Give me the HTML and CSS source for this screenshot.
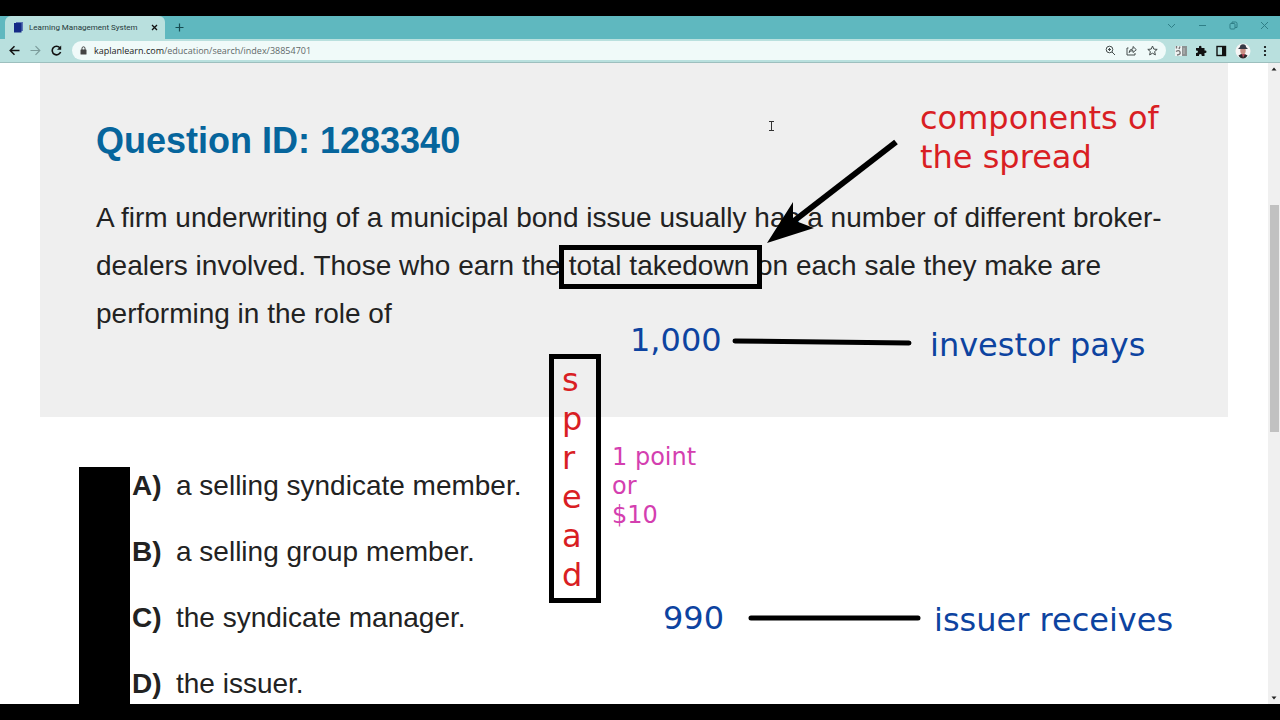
FILE: index.html
```html
<!DOCTYPE html>
<html lang="en">
<head>
  <meta charset="UTF-8" />
  <title>Learning Management System</title>
  <link rel="stylesheet" href="styles.css">
</head>
<body>

  <header class="browser">
    <div class="tabs">
      <div class="tab">
        <svg class="favicon" width="10" height="11" viewBox="0 0 10 11"><path d="M2 0H9V9H2Z" fill="#5b75b5"/><path d="M0 1H7.500V10.500H0Z" fill="#142a86"/></svg>
        <span class="tab-title">Learning Management System</span>
        <button class="tab-close" aria-label="Close tab">
          <svg width="7" height="7" viewBox="0 0 7 7"><path d="M1 1L6 6M6 1L1 6" stroke="#111" stroke-width="1.300"/></svg>
        </button>
      </div>
      <button class="new-tab" aria-label="New tab">
        <svg width="9" height="9" viewBox="0 0 9 9"><path d="M4.500 .500V8.500M.500 4.500H8.500" stroke="#174c52" stroke-width="1.200"/></svg>
      </button>
      <div class="window-buttons">
        <button aria-label="Search tabs"><svg width="9" height="9" viewBox="0 0 9 9"><path d="M1 3L4.500 6.500L8 3"/></svg></button>
        <button aria-label="Minimize"><svg width="9" height="9" viewBox="0 0 9 9"><path d="M1 4.500H8"/></svg></button>
        <button aria-label="Restore"><svg width="9" height="9" viewBox="0 0 9 9"><rect x="1" y="2.500" width="5" height="5.500" rx="1"/><path d="M3 2.500V1H6.500Q8 1 8 2.500V6.500H6"/></svg></button>
        <button aria-label="Close"><svg width="9" height="9" viewBox="0 0 9 9"><path d="M1 1L8 8M8 1L1 8"/></svg></button>
      </div>
    </div>

    <div class="toolbar">
      <div class="nav">
        <button aria-label="Back"><svg width="11" height="11" viewBox="0 0 11 11"><path d="M10.500 5.500H1.500M5.500 1.200L1.200 5.500L5.500 9.800" fill="none" stroke="#111" stroke-width="1.500"/></svg></button>
        <button aria-label="Forward"><svg width="11" height="11" viewBox="0 0 11 11"><path d="M.500 5.500H9.500M5.500 1.200L9.800 5.500L5.500 9.800" fill="none" stroke="#7c9c9b" stroke-width="1.200"/></svg></button>
        <button aria-label="Reload"><svg width="11" height="11" viewBox="0 0 11 11"><path d="M9.600 7A4.300 4.300 0 1 1 8.800 2.700" fill="none" stroke="#111" stroke-width="1.600"/><path d="M10.200 .500V4.700H6Z" fill="#111"/></svg></button>
      </div>
      <div class="address">
        <svg width="7" height="9" viewBox="0 0 7 9"><rect x=".500" y="3.500" width="6" height="5" rx=".600" fill="#444"/><path d="M2 4V2.300A1.500 1.500 0 0 1 5 2.300V4" fill="none" stroke="#444"/></svg>
        <a class="url" href="#">kaplanlearn.com<span>/education/search/index/38854701</span></a>
        <div class="address-buttons">
          <button aria-label="Zoom"><svg width="11" height="11" viewBox="0 0 11 11"><circle cx="4.500" cy="4.500" r="3.300"/><path d="M7 7L10 10M3 4.500H6M4.500 3V6"/></svg></button>
          <button aria-label="Share"><svg width="11" height="11" viewBox="0 0 11 11"><path d="M2.500 3H1V10H9V8"/><path d="M3 7.500Q3.500 4 7 3.800V1.500L10.300 4.700L7 7.500V5.600Q4.500 5.500 3 7.500Z"/></svg></button>
          <button aria-label="Bookmark"><svg width="11" height="11" viewBox="0 0 11 11"><path d="M5.500 1L6.800 4.100L10.200 4.400L7.600 6.600L8.400 9.900L5.500 8.200L2.600 9.900L3.400 6.600L.800 4.400L4.200 4.100Z"/></svg></button>
        </div>
      </div>
      <div class="extensions">
        <button aria-label="Extension"><svg width="12" height="12" viewBox="0 0 12 12"><rect x="6" y="1" width="6" height="10" fill="#8d9292"/><rect y="1" width="7" height="10" fill="#edf1f1"/><path d="M1.500 1V3.500M5 1.500L4 4M1 6.500Q4 4.500 5 7T2 10" fill="none" stroke="#777" stroke-width="1.400"/><path d="M9 3V9" stroke="#bbb"/></svg></button>
        <button aria-label="Extensions"><svg width="12" height="12" viewBox="0 0 12 12"><path d="M1 3H4Q3.500 .800 5.200 .800T6.500 3H9.500V5.500Q11.500 5 11.500 6.700T9.500 8V11H6.800Q7 9 5.300 9T4 11H1V8Q3 8 3 6.700T1 5.500Z" fill="#111"/></svg></button>
        <button aria-label="Side panel"><svg width="12" height="12" viewBox="0 0 12 12"><rect x="2" y="1.500" width="8.500" height="9" fill="none" stroke="#111" stroke-width="1.400"/><path d="M7 1.500H11V10.500H7Z" fill="#111"/></svg></button>
        <button aria-label="Profile"><svg width="16" height="16" viewBox="0 0 16 16"><circle cx="8" cy="8" r="7.500" fill="#f6f4f4"/><path d="M3.500 12.500Q8 9 12.500 12.500Q11 15.500 8 15.500T3.500 12.500Z" fill="#2b2628"/><ellipse cx="8" cy="7.500" rx="2.700" ry="4" fill="#c98f84"/><path d="M5 4Q5 1.300 8 1.300T11 4L13 6H3Z" fill="#373945"/><path d="M7 11L8 15L10 11Z" fill="#b5475a"/></svg></button>
        <button aria-label="Menu"><svg width="12" height="12" viewBox="0 0 12 12"><circle cx="6" cy="2" r="1.100"/><circle cx="6" cy="6" r="1.100"/><circle cx="6" cy="10" r="1.100"/></svg></button>
      </div>
    </div>
  </header>

  <div class="viewport">
    <main class="page">
      <section class="question">
        <h1>Question ID: 1283340</h1>
        <p>A firm underwriting of a municipal bond issue usually has a number of different broker-dealers involved. Those who earn the total takedown on each sale they make are performing in the role of</p>
      </section>

      <ol class="answers">
        <li><b>A)</b> a selling syndicate member.</li>
        <li><b>B)</b> a selling group member.</li>
        <li><b>C)</b> the syndicate manager.</li>
        <li><b>D)</b> the issuer.</li>
      </ol>
    </main>

    <div class="scrollbar">
      <svg width="6" height="4" viewBox="0 0 6 4"><path d="M.500 3.500L3 .500L5.500 3.500Z" fill="#222"/></svg>
      <div class="thumb"></div>
      <svg width="6" height="4" viewBox="0 0 6 4"><path d="M.500 .500L3 3.500L5.500 .500Z" fill="#222"/></svg>
    </div>

    <!-- notes drawn on top of the page -->
    <div class="board">
      <svg class="strokes">
        <path d="M896 79L790 161" stroke="#000" stroke-width="6"/>
        <path d="M767 180L793 139L793 157L814 165Z"/>
        <path d="M735 278L909 280M751 555L918 555" stroke="#000" stroke-width="5" stroke-linecap="round"/>
        <path d="M769 58.500H774M769 67.500H774M771.500 58V68" stroke="#333"/>
      </svg>
      <div class="mask"></div>
      <div class="box takedown"></div>
      <div class="box spread">s<br>p<br>r<br>e<br>a<br>d</div>
      <div class="note red components">components of<br>the spread</div>
      <div class="note blue thousand">1,000</div>
      <div class="note blue investor">investor pays</div>
      <div class="note pink point">1 point<br>or<br>$10</div>
      <div class="note blue net">990</div>
      <div class="note blue issuer">issuer receives</div>
    </div>
  </div>

</body>
</html>
```
FILE: styles.css
```css
* {
  box-sizing: border-box;
}

body {
  margin: 0;
  padding: 16px 0;
  height: 100vh;
  display: flex;
  flex-direction: column;
  background: #000;
  overflow: hidden;
  font-family: "Liberation Sans", Arial, sans-serif;
}

button {
  display: flex;
  align-items: center;
  justify-content: center;
  padding: 0;
  border: none;
  background: none;
  cursor: pointer;
}

/* browser bar */
.browser {
  flex: none;
  background: #b9e0de;
  border-bottom: 1px solid #9dbfbe;
  font-family: "Open Sans", "Noto Sans", sans-serif;
}

.tabs {
  display: flex;
  align-items: center;
  height: 23px;
  padding-left: 5px;
  background: #5fb8bf;
}

.tab {
  display: flex;
  align-items: center;
  align-self: stretch;
  width: 160px;
  padding: 0 7px 0 9px;
  gap: 5px;
  background: #b9e0de;
  border-radius: 6px 6px 0 0;
}

.tab-title {
  flex: 1;
  font-family: Roboto, sans-serif;
  font-size: 8px;
  color: #26393a;
  white-space: nowrap;
}

.new-tab {
  margin-left: 10px;
}

.window-buttons {
  display: flex;
  gap: 22px;
  margin-left: auto;
  padding: 0 11px 4px 0;
}

.window-buttons svg {
  fill: none;
  stroke: #2f7f87;
}

.toolbar {
  display: flex;
  align-items: center;
  height: 23px;
  padding: 0 9px;
}

.nav {
  display: flex;
  gap: 10px;
}

.address {
  flex: 1;
  display: flex;
  align-items: center;
  height: 19px;
  margin-left: 10px;
  padding: 0 8px;
  gap: 7px;
  background: #f0faf9;
  border-radius: 10px;
}

.url {
  flex: 1;
  font-size: 9px;
  color: #222;
  text-decoration: none;
}

.url span {
  color: #5f6868;
}

.address-buttons {
  display: flex;
  gap: 10px;
}

.address-buttons svg {
  fill: none;
  stroke: #444c4c;
}

.extensions {
  display: flex;
  align-items: center;
  gap: 8px;
  margin-left: 9px;
}

/* web page */
.viewport {
  position: relative;
  flex: 1;
  min-height: 0;
  display: flex;
  overflow: hidden;
  background: #fff;
}

.page {
  flex: 1;
  padding: 0 40px;
  font-size: 28px;
  color: #222;
}

.question {
  padding: 53px 56px 79px;
  background: #efefef;
}

.question h1 {
  margin: 0 0 28px;
  font-size: 36px;
  line-height: 50px;
  color: #06659c;
}

.question p {
  margin: 0;
  line-height: 48px;
}

.answers {
  margin: 0;
  padding: 45px 0 0 92px;
  list-style: none;
}

.answers li {
  display: flex;
  height: 66px;
  line-height: 48px;
}

.answers b {
  width: 44px;
}

.scrollbar {
  display: flex;
  flex-direction: column;
  align-items: center;
  justify-content: space-between;
  width: 12px;
  padding: 4px 0;
  background: #f0f0f0;
}

.thumb {
  width: 9px;
  height: 36%;
  margin-bottom: 130px;
  background: #c1c1c1;
}

/* notes */
.board {
  position: absolute;
  inset: 0;
  font-family: "DejaVu Sans", Verdana, sans-serif;
}

.strokes {
  width: 100%;
  height: 100%;
}

.mask {
  position: absolute;
  left: 79px;
  top: 404px;
  bottom: 0;
  width: 51px;
  background: #000;
}

.box {
  position: absolute;
  border: 5px solid #000;
}

.takedown {
  left: 559px;
  top: 182px;
  width: 203px;
  height: 44px;
}

.spread {
  left: 549px;
  top: 291px;
  padding: 2px 8px;
  width: 52px;
  height: 249px;
  font-size: 32px;
  line-height: 39px;
  color: #d91e23;
}

.note {
  position: absolute;
  font-size: 32px;
  line-height: 39px;
  white-space: nowrap;
}

.red { color: #d91e23; }
.blue { color: #0d43a0; }
.pink {
  font-size: 24px;
  line-height: 29px;
  color: #d43fb0;
}

.components { left: 920px; top: 36px; }
.thousand { left: 630px; top: 258px; }
.investor { left: 930px; top: 263px; }
.point { left: 612px; top: 380px; }
.net { left: 663px; top: 536px; }
.issuer { left: 934px; top: 538px; }
```
